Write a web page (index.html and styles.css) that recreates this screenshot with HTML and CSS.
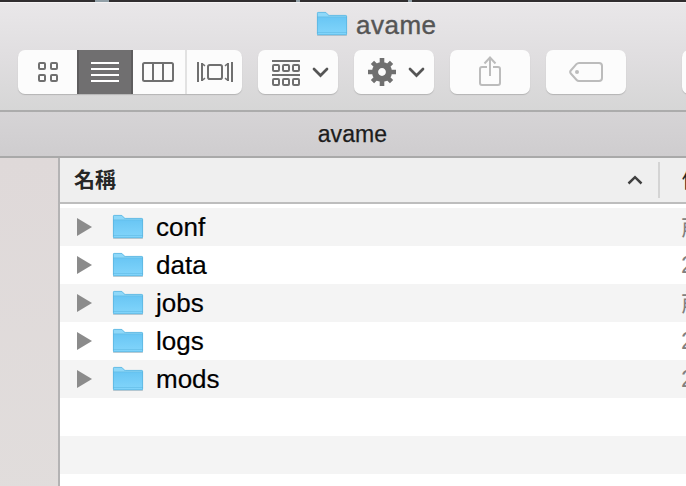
FILE: index.html
```
<!DOCTYPE html>
<html lang="zh-Hant">
<head>
<meta charset="utf-8">
<title>avame</title>
<link rel="stylesheet" href="styles.css">
</head>
<body>
<svg class="defs" width="0" height="0">
  <defs>
    <linearGradient id="front" x1="0" y1="0" x2="0" y2="1"><stop offset="0" stop-color="#69c6f4"/><stop offset="1" stop-color="#82d5fb"/></linearGradient>
    <symbol id="folder" viewBox="0 0 32 28">
      <path d="M1 25.2h30" stroke="#a7b4bb" stroke-width="1.5" opacity=".65"/>
      <path d="M1 24V3.2Q1 2 2.2 2h7q1 0 1.6.9l1.2 1.4q.5.7 1.4.7h16.2q1.4 0 1.4 1.4V24q0 1-1 1H2q-1 0-1-1z" fill="#8ed8f9"/>
      <path d="M1 7h30v17q0 1-1 1H2q-1 0-1-1z" fill="url(#front)"/>
      <path d="M1 6.8h30M1 22.5h30" stroke="#5ab4df" stroke-width=".7" opacity=".7"/>
      <path d="M1.4 24V3.2Q1.4 2.4 2.2 2.4h7q.9 0 1.4.8l1.2 1.4q.5.8 1.6.8h16q1.2 0 1.2 1V24q0 .7-.8.7H2.2q-.8 0-.8-.7z" fill="none" stroke="#58b2dc" stroke-width=".7"/>
    </symbol>
  </defs>
</svg>
<div class="window">
  <div class="backdrop"><i class="b1"></i><i class="b2"></i><i class="b3"></i></div>
  <header class="toolbar">
    <div class="title"><svg class="folder"><use href="#folder"/></svg><span>avame</span></div>
    <div class="tools">
      <div class="views">
        <div class="view icons"><svg width="22" height="22" fill="none" stroke="#707070" stroke-width="2"><rect x="2" y="2" width="6" height="6" rx="1"/><rect x="14" y="2" width="6" height="6" rx="1"/><rect x="2" y="14" width="6" height="6" rx="1"/><rect x="14" y="14" width="6" height="6" rx="1"/></svg></div>
        <div class="view list"><svg width="28" height="20" stroke="#fff" stroke-width="2"><path d="M0 1h28M0 7h28M0 13h28M0 19h28"/></svg></div>
        <div class="view columns"><svg width="32" height="20" fill="none" stroke="#707070" stroke-width="2"><rect x="1" y="1" width="30" height="18" rx="1.5"/><path d="M11 1v18M21 1v18"/></svg></div>
        <div class="view flow"><svg width="36" height="20" fill="none" stroke="#707070" stroke-width="2"><rect x="11" y="3" width="14" height="14" rx="1.8"/><path d="M1 0v20M35 0v20M5 1v18M31 1v18"/><path d="M5 1.5l3 2.4M5 18.5l3-2.4M31 1.5l-3 2.4M31 18.5l-3-2.4" stroke-width="1.5"/></svg></div>
      </div>
      <div class="button"><svg width="80" height="44" fill="none" stroke="#707070" stroke-width="2"><path d="M14 11h28M14 25h28"/><rect x="15" y="15" width="6" height="6" rx="1"/><rect x="25" y="15" width="6" height="6" rx="1"/><rect x="35" y="15" width="6" height="6" rx="1"/><rect x="15" y="29" width="6" height="6" rx="1"/><rect x="25" y="29" width="6" height="6" rx="1"/><rect x="35" y="29" width="6" height="6" rx="1"/><path d="M56 19l6.5 6.500L69 19" stroke="#555" stroke-width="2.7" stroke-linecap="round"/></svg></div>
      <div class="button"><svg width="80" height="44" fill="none"><g transform="translate(28 22)" stroke="#707070"><circle r="7" stroke-width="6.200"/><path stroke-width="4.600" d="M0-8.500V-14M0 8.500V14M8.500 0H14M-8.500 0H-14"/><path stroke-width="4.600" d="M0-8.500V-13.500M0 8.500V13.500M8.500 0H13.500M-8.500 0H-13.500" transform="rotate(45)"/></g><path d="M56 19l6.500 6.500L69 19" stroke="#555" stroke-width="2.700" stroke-linecap="round"/></svg></div>
      <div class="button"><svg width="80" height="44" fill="none" stroke="#bcbcbc" stroke-width="2"><path d="M37 17h-5q-2 0-2 2v14q0 2 2 2h16q2 0 2-2V19q0-2-2-2h-5M40 26V8M34.500 13.500L40 7.500l5.500 6"/></svg></div>
      <div class="button"><svg width="80" height="44" fill="none" stroke="#bcbcbc" stroke-width="2"><path d="M33 13h20q3 0 3 3v12q0 3-3 3H33q-1.500 0-2.600-1.200l-5.600-6.300q-1.300-1.500 0-3l5.600-6.300Q31.500 13 33 13z"/><circle cx="31" cy="22" r="2" fill="#bcbcbc" stroke="none"/></svg></div>
      <div class="button last"></div>
    </div>
  </header>
  <div class="tabbar">avame</div>
  <main class="content">
    <aside class="sidebar"></aside>
    <section class="files">
      <div class="heading"><div class="name">名稱</div><svg class="sort" width="16" height="10" fill="none" stroke="#404040" stroke-width="2.500"><path d="M1.500 8.500L8 2.200l6.500 6.300"/></svg><div class="date">修改日期</div></div>
      <div class="rows">
        <div class="row"><i class="arrow"></i><svg class="folder"><use href="#folder"/></svg><span class="label">conf</span><span class="when">前天</span></div>
        <div class="row"><i class="arrow"></i><svg class="folder"><use href="#folder"/></svg><span class="label">data</span><span class="when">2</span></div>
        <div class="row"><i class="arrow"></i><svg class="folder"><use href="#folder"/></svg><span class="label">jobs</span><span class="when">前天</span></div>
        <div class="row"><i class="arrow"></i><svg class="folder"><use href="#folder"/></svg><span class="label">logs</span><span class="when">2</span></div>
        <div class="row"><i class="arrow"></i><svg class="folder"><use href="#folder"/></svg><span class="label">mods</span><span class="when">2</span></div>
        <div class="row"></div>
        <div class="row"></div>
        <div class="row"></div>
      </div>
    </section>
  </main>
</div>
</body>
</html>
```
FILE: styles.css
```
* { box-sizing: border-box; }
body { margin: 0; overflow: hidden; font-family: "Liberation Sans", "Noto Sans CJK TC", sans-serif; }
svg { display: block; flex: none; }
.defs { position: absolute; }
.window { width: 686px; height: 486px; overflow: hidden; display: flex; flex-direction: column; }
.backdrop { height: 2px; flex: none; background: #302e2f; display: flex; }
.backdrop i { height: 2px; background: #92a0a8; }
.b1 { width: 14px; margin-left: 95px; }
.b2 { width: 4px; margin-left: 187px; }
.b3 { width: 4px; margin-left: 108px; }
.toolbar { height: 110px; flex: none; border-top: 1px solid #f5f3f4; border-bottom: 2px solid #acacac; background: linear-gradient(#e9e7e9, #e0dee0 50%, #d6d6d6); }
.title { height: 47px; padding-left: 316px; display: flex; align-items: flex-start; font-size: 26px; line-height: 30px; letter-spacing: .5px; color: #555; -webkit-text-stroke: .4px #555; }
.title .folder { margin-top: 7px; }
.title span { margin: 7px 0 0 8px; }
.folder { width: 32px; height: 28px; }
.tools { display: flex; gap: 16px; padding-left: 18px; }
.views, .button { height: 44px; border-radius: 7px; background: #fcfcfc; box-shadow: 0 1px 1px #b4b4b4; flex: none; }
.views { width: 224px; display: flex; overflow: hidden; }
.view { display: flex; align-items: center; justify-content: center; }
.icons { width: 59px; }
.list { width: 56px; background: #706f70; border-left: 2px solid #5e5d5e; border-right: 2px solid #5e5d5e; }
.columns { width: 54px; border-right: 2px solid #e2e2e2; padding-right: 2px; }
.flow { width: 55px; }
.button { width: 80px; }
.button.last { margin-left: 40px; }
.tabbar { height: 46px; flex: none; border-bottom: 2px solid #a9a9a9; background: linear-gradient(#d6d4d6, #cfcdcf); text-align: center; padding-left: 19px; font-size: 23px; line-height: 44px; letter-spacing: .1px; color: #1c1c1c; -webkit-text-stroke: .25px #1c1c1c; }
.content { display: flex; flex: 1; }
.sidebar { width: 60px; flex: none; border-right: 2px solid #b4b3b4; background: linear-gradient(#dfd9d9, #e1dddc); }
.files { width: 626px; background: #fff; overflow: hidden; }
.heading { height: 46px; display: flex; align-items: center; background: #efefef; border-bottom: 2px solid #bdbdbd; }
.name { width: 567px; flex: none; padding-left: 14px; font-size: 21px; font-weight: 700; line-height: 44px; color: #262626; }
.sort { margin-right: 15px; }
.date { height: 36px; flex: none; border-left: 2px solid #d4d4d4; padding-left: 22px; font-size: 21px; line-height: 36px; color: #262626; white-space: nowrap; }
.rows { padding-top: 4px; }
.row { height: 38px; display: flex; align-items: center; white-space: nowrap; }
.row:nth-child(odd) { background: #f4f4f4; }
.arrow { width: 15px; height: 18px; flex: none; margin: 0 20px 0 17px; background: #8b8b8b; clip-path: polygon(0 0, 100% 50%, 0 100%); }
.label { width: 537px; flex: none; padding-left: 12px; font-size: 26px; line-height: 38px; color: #000; -webkit-text-stroke: .2px #000; }
.when { flex: none; font-size: 24px; line-height: 38px; color: #808080; }
```
